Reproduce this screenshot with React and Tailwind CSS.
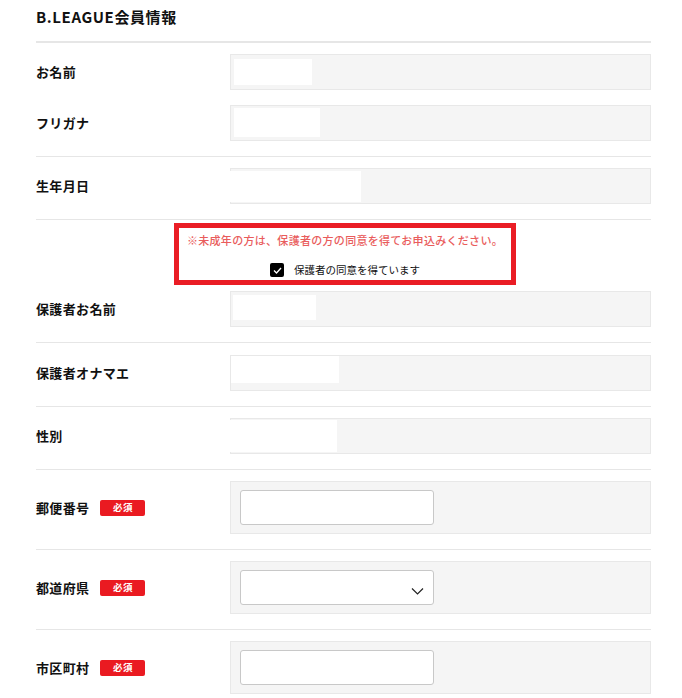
function Badge() {
  return (
    <span className="ml-[11px] flex h-[16px] w-[45px] items-center justify-center rounded-[2px] bg-[#ea1a21] text-[9.5px] font-bold leading-none text-white">
      必須
    </span>
  );
}

function Label({ children, required }) {
  return (
    <div className="flex w-[194px] shrink-0 items-center text-[13px] font-bold leading-[18px] tracking-[0.35px] text-[#111]">
      <span>{children}</span>
      {required && <Badge />}
    </div>
  );
}

function MaskedBox({ fill }) {
  return (
    <div className="h-[36px] flex-1 border border-[#e8e8e8] bg-[#f5f5f5]">
      <div className={"bg-white " + fill}></div>
    </div>
  );
}

function InputBox({ select }) {
  return (
    <div className="flex-1 border border-[#e8e8e8] bg-[#f5f5f5] py-[8px] pl-[9px]">
      <div className="relative h-[35px] w-[194px] rounded-[3px] border border-[#c8c8c8] bg-white">
        {select && (
          <svg
            className="absolute right-[9px] top-[16px]"
            width="13"
            height="8"
            viewBox="0 0 13 8"
            fill="none"
            stroke="#222"
            strokeWidth="1.2"
          >
            <path d="M1 1.5 L6.5 7 L12 1.5" />
          </svg>
        )}
      </div>
    </div>
  );
}

export default function App() {
  return (
    <div className="min-h-[698px] w-[682px] bg-white pl-[36px] pr-[31px] font-['Noto_Sans_CJK_JP','Noto_Sans',sans-serif] text-[#111]">
      <h2 className="border-b-2 border-[#e6e6e6] pb-[14px] pt-[7px] text-[15px] font-bold leading-[20px] tracking-[0.6px]">
        B.LEAGUE会員情報
      </h2>

      {/* group 1 */}
      <div className="flex flex-col gap-[15px] pb-[15px] pt-[11px]">
        <div className="flex items-center">
          <Label>お名前</Label>
          <MaskedBox fill="ml-[3px] mt-[4px] h-[26px] w-[78px]" />
        </div>
        <div className="flex items-center">
          <Label>フリガナ</Label>
          <MaskedBox fill="ml-[3px] mt-[2px] h-[29px] w-[86px]" />
        </div>
      </div>

      <div className="flex items-center border-t border-[#e6e6e6] pb-[15px] pt-[11px]">
        <Label>生年月日</Label>
        <MaskedBox fill="-ml-px mt-[2px] h-[31px] w-[131px]" />
      </div>

      <div className="border-t border-[#e6e6e6] pb-[15px] pt-[3px]">
        <div className="ml-[138px] flex w-[342px] flex-col items-center border-[5px] border-[#ea1d25] pb-[2px] pt-[4px]">
          <p className="text-[11px] font-medium leading-[16px] tracking-[0.3px] text-[#e95c5c]">
            ※未成年の方は、保護者の方の同意を得てお申込みください。
          </p>
          <div className="mt-[14px] flex items-center">
            <span className="flex h-[14px] w-[14px] items-center justify-center rounded-[2px] bg-black">
              <svg width="9" height="7" viewBox="0 0 9 7" fill="none" stroke="white" strokeWidth="1.3">
                <path d="M1 3.5 L3.5 6 L8 1" />
              </svg>
            </span>
            <span className="ml-[10px] text-[10.5px] leading-[16px] text-[#111]">保護者の同意を得ています</span>
          </div>
        </div>
        <div className="mt-[6px] flex items-center">
          <Label>保護者お名前</Label>
          <MaskedBox fill="ml-[2px] mt-[3px] h-[25px] w-[83px]" />
        </div>
      </div>

      <div className="flex items-center border-t border-[#e6e6e6] pb-[15px] pt-[12px]">
        <Label>保護者オナマエ</Label>
        <MaskedBox fill="ml-0 mt-0 h-[27px] w-[108px]" />
      </div>

      <div className="flex items-center border-t border-[#e6e6e6] pb-[15px] pt-[11px]">
        <Label>性別</Label>
        <MaskedBox fill="-ml-px mt-[1px] h-[32px] w-[107px]" />
      </div>

      <div className="flex items-center border-t border-[#e6e6e6] pb-[15px] pt-[11px]">
        <Label required>郵便番号</Label>
        <InputBox />
      </div>

      <div className="flex items-center border-t border-[#e6e6e6] pb-[15px] pt-[11px]">
        <Label required>都道府県</Label>
        <InputBox select />
      </div>

      <div className="flex items-center border-t border-[#e6e6e6] pb-[15px] pt-[11px]">
        <Label required>市区町村</Label>
        <InputBox />
      </div>
    </div>
  );
}
